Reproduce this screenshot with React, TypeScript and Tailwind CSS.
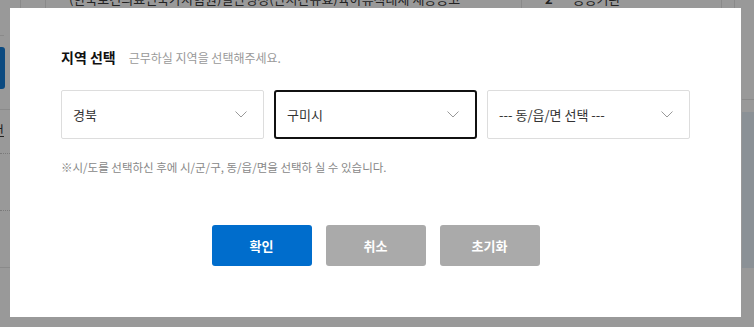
import React from "react";

const selects = [
  { id: 1, label: "경북", focused: false },
  { id: 2, label: "구미시", focused: true },
  { id: 3, label: "--- 동/읍/면 선택 ---", focused: false },
];

const buttons = [
  { id: 1, label: "확인", className: "bg-[#006dcc]" },
  { id: 2, label: "취소", className: "bg-[#aaaaaa]" },
  { id: 3, label: "초기화", className: "bg-[#aaaaaa]" },
];

const Chevron = () => (
  <svg width="12" height="7" viewBox="0 0 12 7" fill="none">
    <path d="M0.5 0.5L6 6L11.5 0.5" stroke="#999999" strokeWidth="1" />
  </svg>
);

const App: React.FC = () => {
  return (
    <div
      className="relative w-[754px] h-[327px] overflow-hidden bg-[#999999]"
      style={{ fontFamily: '"Noto Sans CJK KR", "Noto Sans", sans-serif' }}
    >
      {/* page behind the dim */}
      <div className="flex h-[8px] overflow-hidden text-[13px] leading-[16px] text-[#222] whitespace-nowrap">
        <div className="w-[21px] border-r border-[#8a8a8a]" />
        <div className="w-[25px] border-r border-[#8a8a8a]" />
        <div className="w-[476px] border-r border-[#8a8a8a] pl-[23px] -mt-[9px]">
          (한국보건의료인국가시험원)일반행정(단시간유효)육아휴직대체 채용공고
        </div>
        <div className="w-[200px] border-r border-[#8a8a8a] flex gap-[20px] pl-[23px] -mt-[9px]">
          <span className="font-bold">2</span>
          <span>공공기관</span>
        </div>
        <div className="w-[13px] border-r border-[#8a8a8a]" />
      </div>
      <div className="absolute left-0 top-[35px] w-[4px] h-px bg-[#8a8a8a]" />
      <div className="absolute left-0 top-[47px] w-[5px] h-[42px] rounded-r-[3px] bg-[#0b4a80]" />
      <div className="absolute left-0 top-[109px] w-[10px] h-px bg-[#8a8a8a]" />
      <p className="absolute left-[-8px] top-[122px] text-[13px] leading-[16px] text-[#222] underline">건</p>
      <div className="absolute left-0 top-[153px] w-[10px] border-t border-dotted border-[#7a7a7a]" />
      <div className="absolute left-0 top-[210px] w-[10px] border-t border-dotted border-[#7a7a7a]" />
      <div className="absolute left-0 top-[267px] w-[10px] h-px bg-[#8a8a8a]" />
      <div className="absolute left-[742px] top-[99px] w-[12px] h-px bg-[#8a8a8a]" />
      <div className="absolute left-[742px] top-[112px] w-[12px] h-[156px] bg-[#8b9196]" />

      {/* modal */}
      <div className="absolute left-[10px] top-[8px] w-[731px] h-[309px] bg-white pt-[39px] pl-[51px]">
        <div className="flex items-baseline">
          <h2 className="text-[14px] font-bold text-[#111]">지역 선택</h2>
          <p className="ml-[13px] text-[12px] text-[#999]">근무하실 지역을 선택해주세요.</p>
        </div>

        <div className="flex gap-[10px] mt-[22px]">
          {selects.map((s) => (
            <div
              key={s.id}
              className={
                s.focused
                  ? "w-[203px] h-[49px] flex items-center justify-between pl-[11px] pr-[16px] border-2 border-[#111] rounded-[3px]"
                  : "w-[203px] h-[49px] flex items-center justify-between pl-[11px] pr-[16px] border border-[#dddddd] rounded-[2px]"
              }
            >
              <span className="text-[13px] text-[#333]">{s.label}</span>
              <Chevron />
            </div>
          ))}
        </div>

        <p className="mt-[20px] text-[11.5px] text-[#888]">
          ※시/도를 선택하신 후에 시/군/구, 동/읍/면을 선택하 실 수 있습니다.
        </p>

        <div className="flex justify-center gap-[14px] mt-[49px] mr-[51px]">
          {buttons.map((b) => (
            <button
              key={b.id}
              className={`w-[100px] h-[41px] rounded-[3px] text-white text-[13px] font-bold ${b.className}`}
            >
              {b.label}
            </button>
          ))}
        </div>
      </div>
    </div>
  );
};

export default App;
